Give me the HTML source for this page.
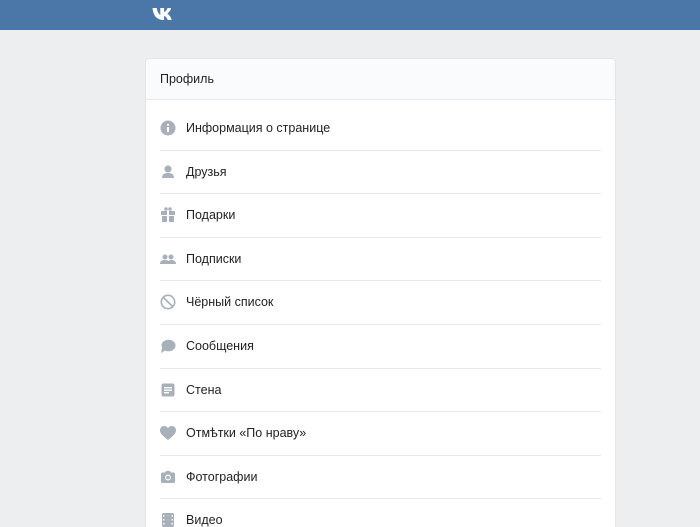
<!DOCTYPE html>
<html><head><meta charset="utf-8"><style>
html,body{margin:0;width:700px;height:527px;overflow:hidden}
body{background:#edeef0;font-family:"Liberation Sans","DejaVu Sans",sans-serif;position:relative}
.top{position:absolute;left:0;top:0;width:700px;height:30px;background:#4a76a8}
.card{position:absolute;left:146px;top:59px;width:469px;height:468px;overflow:hidden;background:#fff;border-radius:3px 3px 0 0;box-shadow:0 0 0 1px #e3e4e8}
.hd{height:40px;background:#fafbfc;border-bottom:1px solid #e7e8ec;font-size:12.5px;color:#222;line-height:41px;padding-left:14px}
.list{padding-top:7px}
.row{position:relative;margin:0 14px;height:43.6px;box-sizing:border-box;border-bottom:1px solid #e7e8ec;font-size:12.5px;color:#222;line-height:43px;padding-left:26px}
.row svg{position:absolute;left:0;top:13px}
</style></head><body>
<div class="top"><svg style="position:absolute;left:152px;top:7px" width="24" height="15" viewBox="0 0 24 15"><path fill="#fff" d="M0.5 1h4.2c.5 3 2 6 3.6 7V1h3.8v4c1.3-.3 2.8-2 3.4-4h3.6c-.6 2.6-2.4 4.6-3.8 5.6 1.4.8 3.4 2.6 4.4 6.4h-4c-.8-2.2-2.3-3.8-3.6-4V13h-.8C4.8 13 1.2 8.5.5 1z"/></svg></div>
<div class="card">
<div class="hd">Профиль</div>
<div class="list">
<div class="row"><svg width="16" height="16"><circle cx="8" cy="8" r="7.5" fill="#a8b0ba"/><rect x="7" y="7" width="2" height="5" fill="#fff"/><circle cx="8" cy="4.8" r="1.1" fill="#fff"/></svg>Информация о странице</div>
<div class="row"><svg width="16" height="16"><circle cx="8" cy="5" r="3.5" fill="#a8b0ba"/><path d="M2 14c0-4 3-5 6-5s6 1 6 5z" fill="#a8b0ba"/></svg>Друзья</div>
<div class="row"><svg width="16" height="16"><rect x="1" y="4" width="6" height="4" fill="#a8b0ba"/><rect x="9" y="4" width="6" height="4" fill="#a8b0ba"/><rect x="2" y="9" width="5" height="6" fill="#a8b0ba"/><rect x="9" y="9" width="5" height="6" fill="#a8b0ba"/><circle cx="6" cy="2" r="1.8" fill="#a8b0ba"/><circle cx="10" cy="2" r="1.8" fill="#a8b0ba"/></svg>Подарки</div>
<div class="row"><svg width="16" height="16"><circle cx="5" cy="6" r="2.5" fill="#a8b0ba"/><circle cx="11" cy="6" r="2.5" fill="#a8b0ba"/><path d="M0 13c0-3 2-4 5-4s5 1 5 4zM8 13c0-3 1-4 3-4 3 0 5 1 5 4z" fill="#a8b0ba"/></svg>Подписки</div>
<div class="row"><svg width="16" height="16"><circle cx="8" cy="8" r="6.7" fill="none" stroke="#a8b0ba" stroke-width="1.6"/><path d="M3.5 3.5l9 9" stroke="#a8b0ba" stroke-width="1.6"/></svg>Чёрный список</div>
<div class="row"><svg width="16" height="16"><ellipse cx="8.5" cy="7.5" rx="7" ry="5.8" fill="#a8b0ba"/><path d="M2 10l-1 5 5-3z" fill="#a8b0ba"/></svg>Сообщения</div>
<div class="row"><svg width="16" height="16"><rect x="1.5" y="1.5" width="13" height="13" rx="2" fill="#a8b0ba"/><rect x="4" y="5" width="8" height="1.4" fill="#fff"/><rect x="4" y="7.5" width="8" height="1.4" fill="#fff"/><rect x="4" y="10" width="5" height="1.4" fill="#fff"/></svg>Стена</div>
<div class="row"><svg width="16" height="16"><path d="M8 15C3 11 0 8.5 0 5.2 0 2.6 2 1 4.3 1 6 1 7.2 2 8 3.2 8.8 2 10 1 11.7 1 14 1 16 2.6 16 5.2 16 8.5 13 11 8 15z" fill="#a8b0ba"/></svg>Отмѣтки «По нраву»</div>
<div class="row"><svg width="16" height="16"><path d="M1 5a1.5 1.5 0 0 1 1.5-1.5h2.5L6 2h4l1 1.5h2.5A1.5 1.5 0 0 1 15 5v7.5a1.5 1.5 0 0 1-1.5 1.5h-11A1.5 1.5 0 0 1 1 12.5z" fill="#a8b0ba"/><circle cx="8" cy="8.5" r="3" fill="#fff"/><circle cx="8" cy="8.5" r="1.8" fill="#a8b0ba"/></svg>Фотографии</div>
<div class="row"><svg width="16" height="16"><rect x="2" y="1" width="12" height="14" rx="1.5" fill="#a8b0ba"/><g fill="#fff"><rect x="3" y="3" width="1.5" height="1.5"/><rect x="3" y="7" width="1.5" height="1.5"/><rect x="3" y="11" width="1.5" height="1.5"/><rect x="11.5" y="3" width="1.5" height="1.5"/><rect x="11.5" y="7" width="1.5" height="1.5"/><rect x="11.5" y="11" width="1.5" height="1.5"/></g></svg>Видео</div>
</div></div>
</body></html>
